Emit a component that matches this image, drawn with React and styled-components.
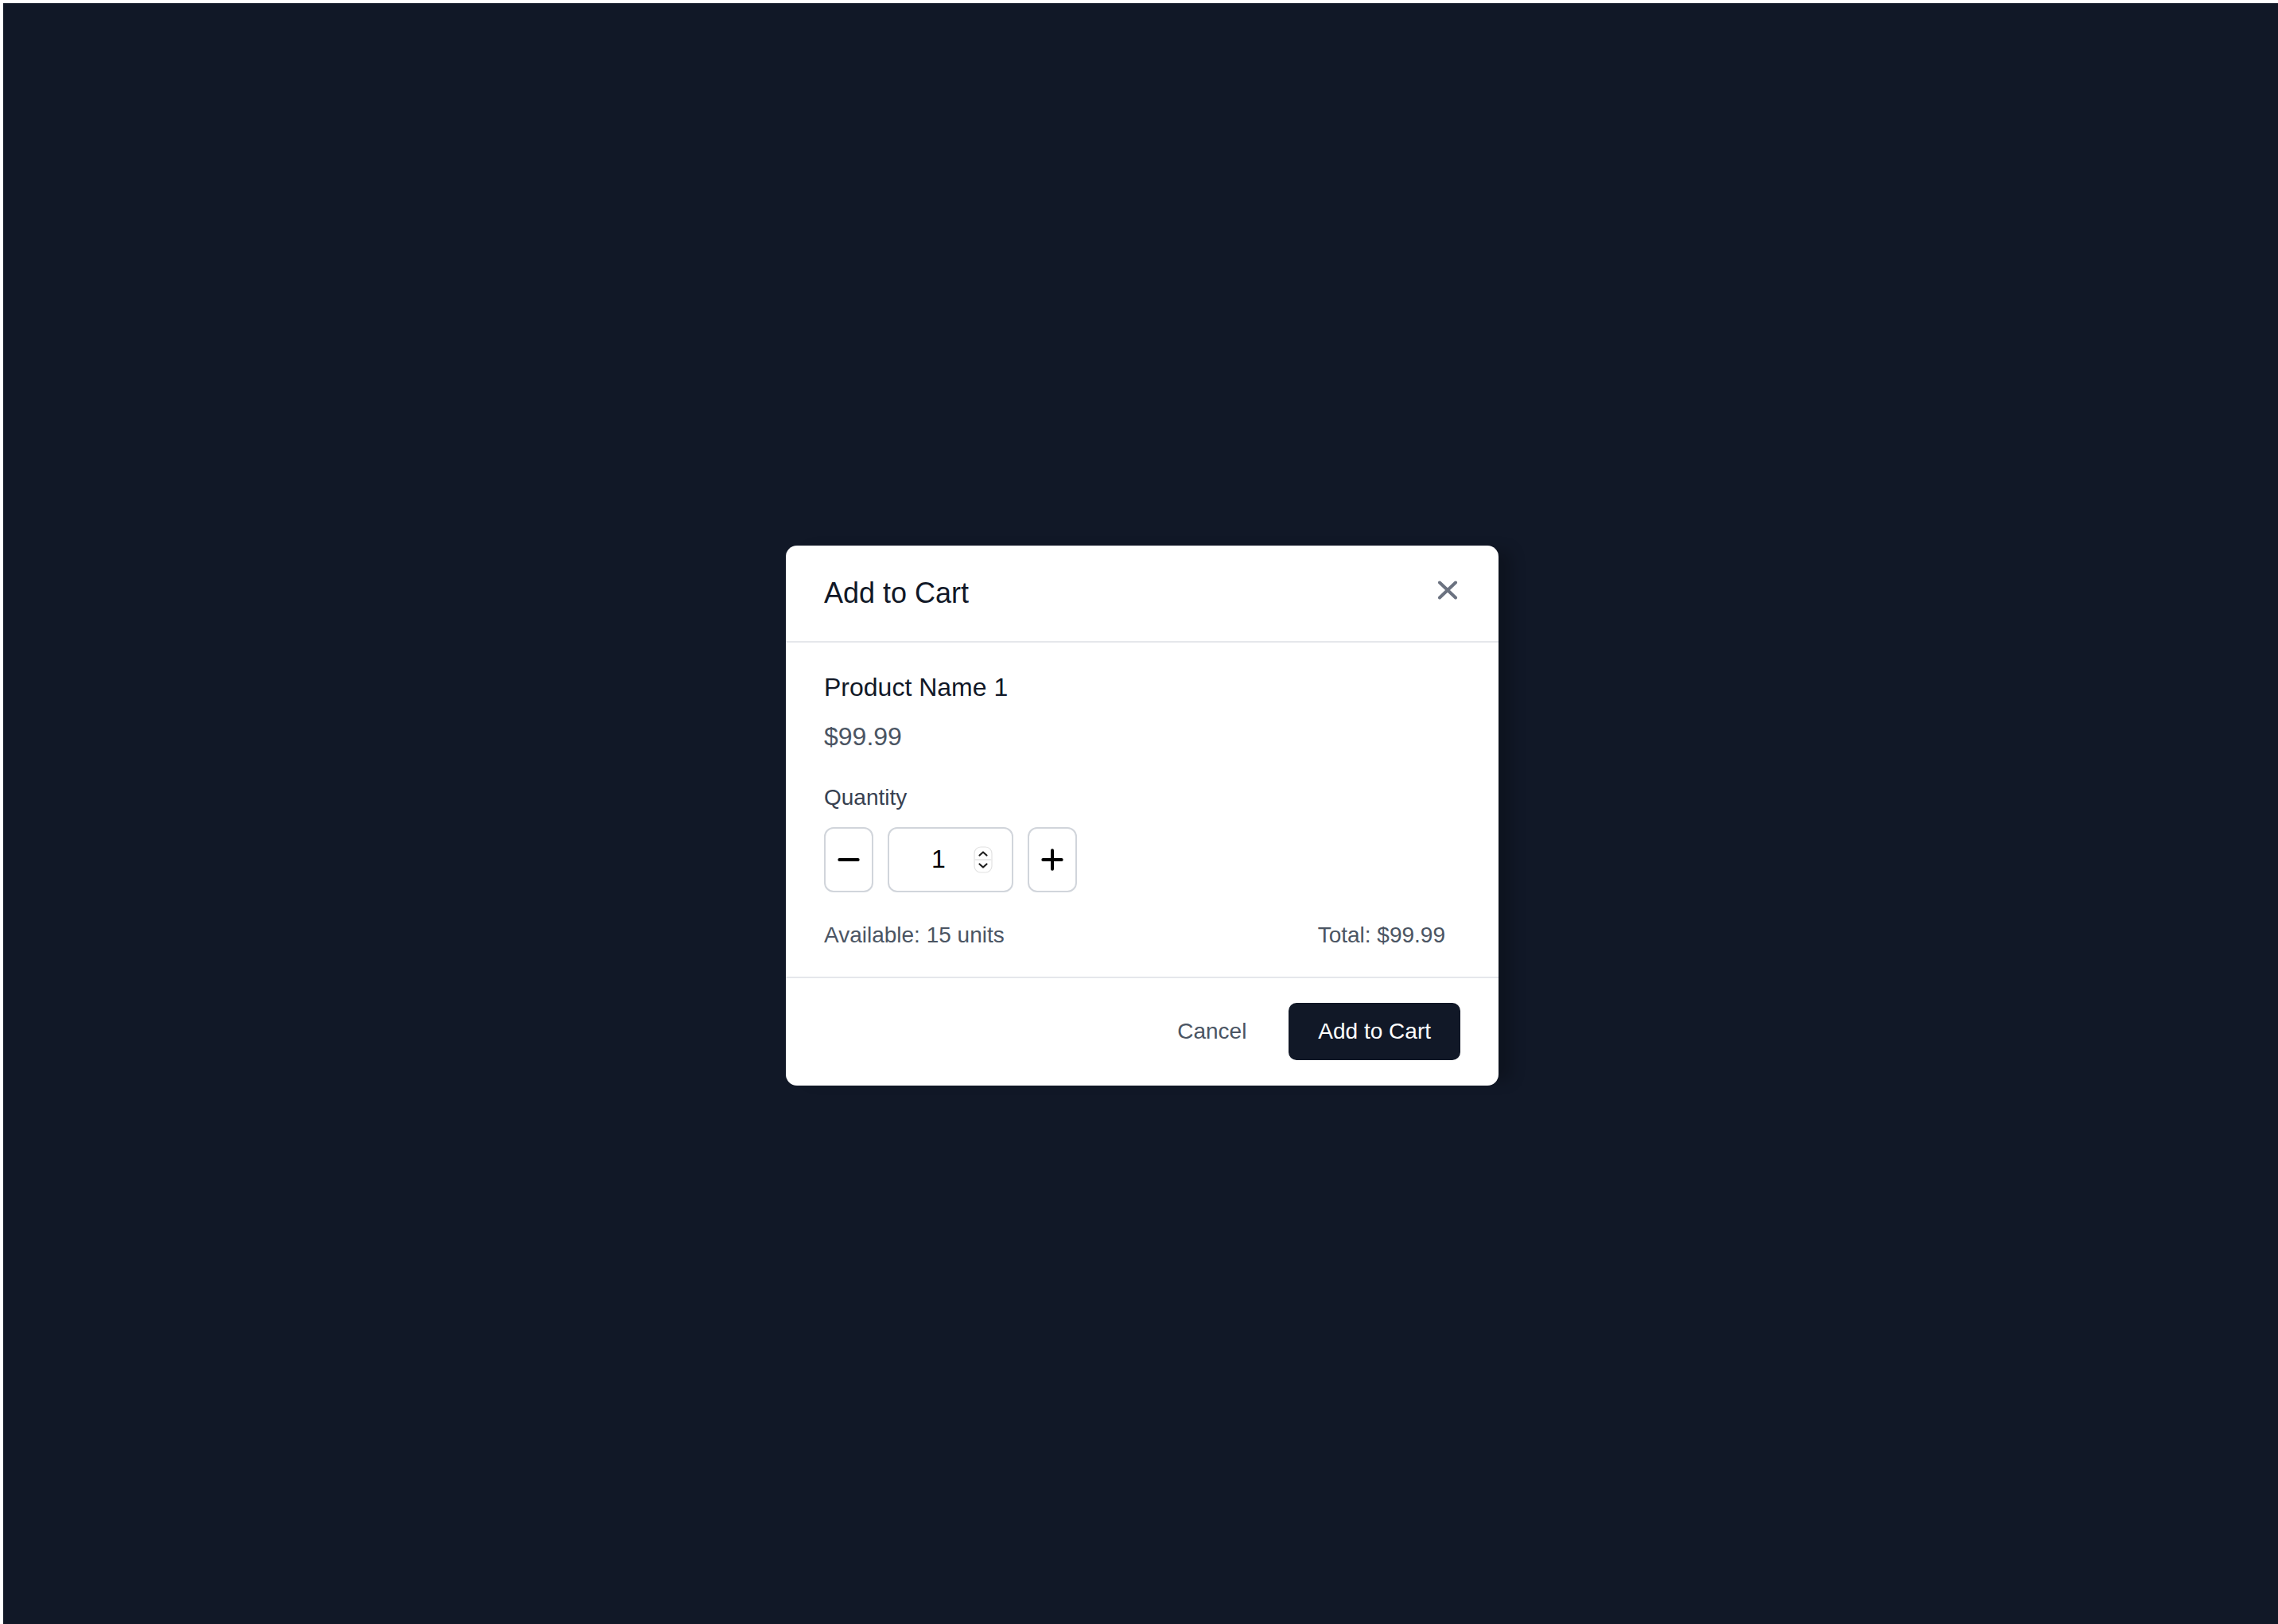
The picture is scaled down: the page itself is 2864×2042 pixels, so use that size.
import React from "react"
import styled, { createGlobalStyle } from "styled-components"
import { Minus, Plus } from "lucide-react"

const GlobalStyle = createGlobalStyle`
  html, body {
    margin: 0;
    padding: 0;
    background: #ffffff;
    font-family: "Liberation Sans", Arial, Helvetica, sans-serif;
  }
  * {
    box-sizing: border-box;
  }
`

const Backdrop = styled.div`
  margin: 4px 0 0 4px;
  padding: 4px 0 0 4px;
  height: calc(100vh - 4px);
  background: #111827;
  display: flex;
  align-items: center;
  justify-content: center;
`

const Modal = styled.div`
  width: 896px;
  background: #ffffff;
  border-radius: 14px;
  box-shadow: 22px 0 18px -6px rgba(0, 0, 0, 0.22);
  overflow: hidden;
`

const Header = styled.div`
  display: flex;
  justify-content: space-between;
  align-items: flex-start;
  padding: 32px 48px;
  border-bottom: 2px solid #e5e7eb;
`

const Title = styled.h2`
  margin: 0;
  font-size: 36px;
  line-height: 56px;
  font-weight: 500;
  color: #111827;
`

const CloseButton = styled.button`
  border: 0;
  background: none;
  padding: 0;
  margin-top: 12px;
  margin-right: 3px;
  display: flex;
  cursor: pointer;
`

const Body = styled.div`
  padding: 32px 48px;
  border-bottom: 2px solid #e5e7eb;
`

const ProductName = styled.h3`
  margin: 0;
  font-size: 32px;
  line-height: 48px;
  font-weight: 400;
  color: #111827;
`

const Price = styled.p`
  margin: 14px 0 0;
  font-size: 32px;
  line-height: 48px;
  color: #4b5563;
`

const Label = styled.label`
  display: block;
  margin: 33px 0 17px;
  font-size: 28px;
  line-height: 40px;
  color: #374151;
`

const QtyRow = styled.div`
  display: flex;
  gap: 18px;
`

const StepButton = styled.button`
  width: 62px;
  height: 82px;
  padding: 0;
  display: flex;
  align-items: center;
  justify-content: center;
  background: #ffffff;
  border: 2px solid #d1d5db;
  border-radius: 12px;
  color: #000000;
  cursor: pointer;
`

const QtyField = styled.div`
  width: 158px;
  height: 82px;
  display: flex;
  align-items: center;
  padding: 0 24px 0 18px;
  border: 2px solid #d1d5db;
  border-radius: 12px;
  font-size: 32px;
  color: #000000;
`

const QtyValue = styled.span`
  flex: 1;
  text-align: center;
`

const InfoRow = styled.div`
  display: flex;
  justify-content: space-between;
  margin: 34px 19px 0 0;
  font-size: 28px;
  line-height: 40px;
  color: #4b5563;
`

const Footer = styled.div`
  display: flex;
  justify-content: flex-end;
  align-items: center;
  gap: 21px;
  padding: 31px 48px 32px;
`

const Button = styled.button`
  font-family: inherit;
  font-size: 28px;
  line-height: 40px;
  border: 0;
  border-radius: 10px;
  cursor: pointer;
  padding: ${p => (p.$primary ? "16px 37px" : "16px 32px")};
  background: ${p => (p.$primary ? "#111827" : "transparent")};
  color: ${p => (p.$primary ? "#ffffff" : "#4b5563")};
`

const CloseIcon = () => (
  <svg width="26" height="24" viewBox="0 0 26 24" fill="none">
    <path
      d="M3 2.5 L23 21.5 M23 2.5 L3 21.5"
      stroke="#6b7280"
      strokeWidth="4"
      strokeLinecap="round"
    />
  </svg>
)

// mac style number spinner
const Spinner = () => (
  <svg width="24" height="34" viewBox="0 0 24 34" fill="none">
    <rect x="1" y="1" width="22" height="32" rx="8" fill="#ffffff" stroke="#e2e2e2" strokeWidth="1.2" />
    <line x1="1.5" y1="17" x2="22.5" y2="17" stroke="#e6e6e6" strokeWidth="1.5" />
    <path d="M7.5 11.5 L12 7.5 L16.5 11.5" stroke="#1f1f1f" strokeWidth="2.2" strokeLinecap="round" strokeLinejoin="round" />
    <path d="M7.5 22.5 L12 26.5 L16.5 22.5" stroke="#1f1f1f" strokeWidth="2.2" strokeLinecap="round" strokeLinejoin="round" />
  </svg>
)

export default function App() {
  const quantity = 1
  const price = 99.99

  return (
    <>
      <GlobalStyle />
      <Backdrop>
        <Modal>
          <Header>
            <Title>Add to Cart</Title>
            <CloseButton aria-label="Close">
              <CloseIcon />
            </CloseButton>
          </Header>

          <Body>
            <ProductName>Product Name 1</ProductName>
            <Price>${price.toFixed(2)}</Price>

            <Label>Quantity</Label>
            <QtyRow>
              <StepButton aria-label="Decrease">
                <Minus size={40} strokeWidth={2.4} />
              </StepButton>
              <QtyField>
                <QtyValue>{quantity}</QtyValue>
                <Spinner />
              </QtyField>
              <StepButton aria-label="Increase">
                <Plus size={40} strokeWidth={2.4} />
              </StepButton>
            </QtyRow>

            <InfoRow>
              <span>Available: 15 units</span>
              <span>Total: ${(price * quantity).toFixed(2)}</span>
            </InfoRow>
          </Body>

          <Footer>
            <Button>Cancel</Button>
            <Button $primary>Add to Cart</Button>
          </Footer>
        </Modal>
      </Backdrop>
    </>
  )
}
